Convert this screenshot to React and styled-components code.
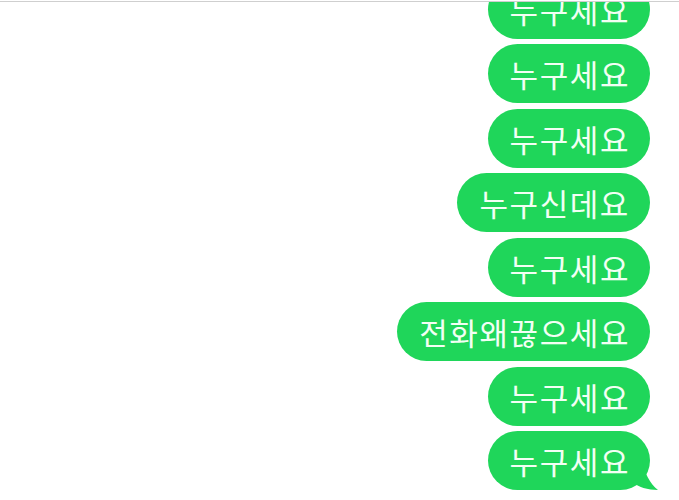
import React from "react";
import styled, { createGlobalStyle } from "styled-components";

const Global = createGlobalStyle`
  html, body { margin: 0; padding: 0; background: #ffffff; }
  body { width: 679px; height: 500px; overflow: hidden; font-family: "Noto Sans CJK KR", "Noto Sans", sans-serif; }
`;

const Screen = styled.div`
  width: 679px;
  height: 500px;
  display: flex;
  flex-direction: column;
  background: #fff;
  overflow: hidden;
`;

const TopBar = styled.div`
  height: 1px;
  flex: none;
  border-bottom: 1px solid #cfcfcf;
  position: relative;
  z-index: 2;
  background: #fff;
`;

const Viewport = styled.div`
  flex: 1;
  overflow: hidden;
`;

const Thread = styled.div`
  display: flex;
  flex-direction: column;
  align-items: flex-end;
  gap: 5.5px;
  padding-right: 29px;
  margin-top: -22.5px;
`;

const Bubble = styled.div`
  position: relative;
  height: 59px;
  padding: 0 20px 0 22px;
  box-sizing: border-box;
  display: flex;
  align-items: center;
  border-radius: 30px;
  background: #1fd65a;
  color: #f2fff4;
  font-size: 31px;
  font-weight: 400;
  letter-spacing: 1.6px;
  line-height: 1;
  white-space: nowrap;
`;

const Tail = styled.svg`
  position: absolute;
  right: -8px;
  bottom: 0;
  width: 30px;
  height: 30px;
`;

const messages = [
  "누구세요",
  "누구세요",
  "누구세요",
  "누구신데요",
  "누구세요",
  "전화왜끊으세요",
  "누구세요",
  "누구세요",
];

export default function App() {
  return (
    <>
      <Global />
      <Screen>
        <TopBar />
        <Viewport>
          <Thread>
            {messages.map((m, i) => (
              <Bubble key={i}>
                {m}
                {i === messages.length - 1 && (
                  <Tail viewBox="0 0 30 30">
                    <path d="M0 0 L14 0 C16 12 22 24 30 30 C20 30 10 27 4 22 L0 22 Z" fill="#1fd65a" />
                  </Tail>
                )}
              </Bubble>
            ))}
          </Thread>
        </Viewport>
      </Screen>
    </>
  );
}
